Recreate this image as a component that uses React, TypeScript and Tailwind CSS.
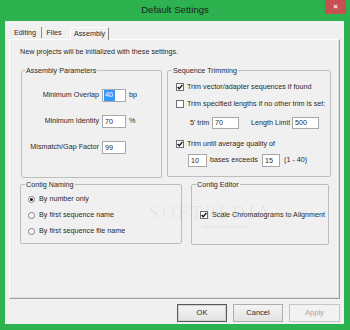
import React from "react";

function Check({ checked }: { checked: boolean }) {
  return (
    <span className="w-[8px] h-[8px] border border-[#707070] bg-white flex items-center justify-center shrink-0">
      {checked && (
        <svg width="6" height="6" viewBox="0 0 6 6">
          <path d="M0.6 2.9 L2.3 4.7 L5.4 0.9" fill="none" stroke="#111" strokeWidth="1.4" />
        </svg>
      )}
    </span>
  );
}

function Radio({ checked }: { checked: boolean }) {
  return (
    <span className="w-[7px] h-[7px] rounded-full border border-[#808080] bg-white flex items-center justify-center shrink-0">
      {checked && <span className="w-[3px] h-[3px] rounded-full bg-[#111]" />}
    </span>
  );
}

function Field({ value, cls, selected }: { value: string; cls: string; selected?: boolean }) {
  return (
    <span className={"border border-[#a8a8a8] bg-white flex items-center pl-[1px] shrink-0 " + cls}>
      {selected ? (
        <span className="bg-[#3399ff] text-white px-[1px] leading-[10px] h-[11px] w-[11px]">{value}</span>
      ) : (
        <span className="px-[1px] leading-[10px]">{value}</span>
      )}
    </span>
  );
}

export default function App() {
  return (
    <div className="w-[350px] h-[330px] bg-[#2cb24e] flex flex-col font-['Liberation_Sans',Arial,sans-serif] text-[7.2px] text-[#2a2a2a] overflow-hidden">
      {/* title bar */}
      <div className="h-[21px] relative flex items-center justify-center shrink-0">
        <span className="text-[9.6px] text-[#1f1f1f]">Default Settings</span>
        <div className="absolute right-[4px] top-0 w-[21px] h-[14px] bg-[#c75050] flex items-center justify-center">
          <span className="text-white text-[8px] font-bold leading-none">×</span>
        </div>
      </div>
      {/* client */}
      <div className="ml-[5px] mr-[6px] mb-[6px] flex-1 bg-[#f0f0f0] flex flex-col">
        {/* tabs */}
        <div className="h-[18px] pl-[4px] flex items-end shrink-0">
          <div className="w-[33px] h-[11px] border-r border-[#8a8a8a] flex items-center justify-center leading-[9px] mb-[1px]">
            Editing
          </div>
          <div className="w-[26px] h-[11px] flex items-center justify-center leading-[9px] mb-[1px] pr-[2px]">Files</div>
          <div className="ml-[2px] w-[39px] h-[13px] border-t border-l border-white border-r border-r-[#8a8a8a] bg-[#f0f0f0] flex items-start justify-center pt-[1px] leading-[9px] relative z-10 -mb-[1px]">
            Assembly
          </div>
        </div>
        {/* panel */}
        <div className="ml-[4px] w-[331px] h-[260px] border-t border-l border-white border-r border-b border-r-[#a0a0a0] border-b-[#a0a0a0] shadow-[inset_-1px_-1px_0_#dcdcdc] relative flex flex-col">
          <div className="pl-[10px] pt-[7px] leading-[9px]">New projects will be initialized with these settings.</div>
          {/* top row */}
          <div className="flex pl-[11px] gap-[5px] mt-[10px]">
            <fieldset className="border border-[#bdbdbd] rounded-[2px] w-[141px] h-[112px] min-w-0">
              <legend className="ml-[3px] px-[1px] leading-[9px]">Assembly Parameters</legend>
              <div className="flex flex-col gap-[13px] mt-[14px]">
                <div className="flex items-center h-[13px]">
                  <span className="w-[77px] text-right">Minimum Overlap</span>
                  <Field value="40" cls="ml-[3px] w-[24px] h-[13px]" selected />
                  <span className="ml-[3px]">bp</span>
                </div>
                <div className="flex items-center h-[13px]">
                  <span className="w-[77px] text-right">Minimum Identity</span>
                  <Field value="70" cls="ml-[3px] w-[24px] h-[13px]" />
                  <span className="ml-[3px]">%</span>
                </div>
                <div className="flex items-center h-[13px]">
                  <span className="w-[77px] text-right">Mismatch/Gap Factor</span>
                  <Field value="99" cls="ml-[3px] w-[24px] h-[13px]" />
                </div>
              </div>
            </fieldset>
            <fieldset className="border border-[#bdbdbd] rounded-[2px] w-[164px] h-[111px] min-w-0">
              <legend className="ml-[4px] px-[1px] leading-[9px]">Sequence Trimming</legend>
              <div className="flex flex-col pl-[8px] mt-[8px]">
                <div className="flex items-center h-[8px]">
                  <Check checked />
                  <span className="ml-[3px]">Trim vector/adapter sequences if found</span>
                </div>
                <div className="flex items-center h-[8px] mt-[9px]">
                  <Check checked={false} />
                  <span className="ml-[3px] whitespace-nowrap">Trim specified lengths if no other trim is set:</span>
                </div>
                <div className="flex items-center h-[12px] mt-[9px] pl-[14px]">
                  <span className="w-[22px]">5' trim</span>
                  <Field value="70" cls="w-[27px] h-[12px]" />
                  <span className="ml-[12px] w-[41px]">Length Limit</span>
                  <Field value="500" cls="w-[27px] h-[12px]" />
                </div>
                <div className="flex items-center h-[8px] mt-[11px]">
                  <Check checked />
                  <span className="ml-[3px]">Trim until average quality of</span>
                </div>
                <div className="flex items-center h-[13px] mt-[6px] pl-[12px]">
                  <Field value="10" cls="w-[19px] h-[13px]" />
                  <span className="ml-[3px] w-[52px]">bases exceeds</span>
                  <Field value="15" cls="w-[18px] h-[13px]" />
                  <span className="ml-[4px]">(1 - 40)</span>
                </div>
              </div>
            </fieldset>
          </div>
          {/* bottom row */}
          <div className="flex pl-[10px] gap-[9px] mt-[2px]">
            <fieldset className="border border-[#bdbdbd] rounded-[2px] w-[162px] h-[64px] min-w-0">
              <legend className="ml-[4px] px-[1px] leading-[9px]">Contig Naming</legend>
              <div className="flex flex-col gap-[8px] pl-[7px] mt-[6px]">
                <div className="flex items-center h-[8px]">
                  <Radio checked />
                  <span className="ml-[4px]">By number only</span>
                </div>
                <div className="flex items-center h-[8px]">
                  <Radio checked={false} />
                  <span className="ml-[4px]">By first sequence name</span>
                </div>
                <div className="flex items-center h-[8px]">
                  <Radio checked={false} />
                  <span className="ml-[4px]">By first sequence file name</span>
                </div>
              </div>
            </fieldset>
            <fieldset className="border border-[#bdbdbd] rounded-[2px] w-[138px] h-[65px] min-w-0">
              <legend className="ml-[4px] px-[1px] leading-[9px]">Contig Editor</legend>
              <div className="flex items-center h-[8px] pl-[8px] mt-[22px]">
                <Check checked />
                <span className="ml-[4px]">Scale Chromatograms to Alignment</span>
              </div>
            </fieldset>
          </div>
          {/* watermark */}
          <div className="absolute left-[139px] top-[163px] pointer-events-none flex flex-col items-center">
            <span className="text-[18px] tracking-[3px] font-['Liberation_Serif',serif] text-[rgba(0,0,0,0.06)] leading-[20px]">SOFTPEDIA</span>
            <span className="text-[5.5px] text-[rgba(0,0,0,0.12)] leading-[7px] ml-[28px]">www.softpedia.com</span>
          </div>
        </div>
        {/* buttons */}
        <div className="flex justify-end gap-[6px] pr-[4px] mt-[5px]">
          <div className="w-[50px] h-[18px] border border-[#5a5a5a] bg-gradient-to-b from-[#f4f4f4] to-[#e3e3e3] flex items-center justify-center shadow-[inset_0_0_0_1px_#d0d0d0] text-[7.5px]">
            OK
          </div>
          <div className="w-[50px] h-[18px] border border-[#adadad] bg-gradient-to-b from-[#f4f4f4] to-[#e3e3e3] flex items-center justify-center text-[7.5px]">
            Cancel
          </div>
          <div className="w-[51px] h-[18px] border border-[#c6c6c6] bg-[#f2f2f2] flex items-center justify-center text-[#a6a6a6] text-[7.5px]">
            Apply
          </div>
        </div>
      </div>
    </div>
  );
}
